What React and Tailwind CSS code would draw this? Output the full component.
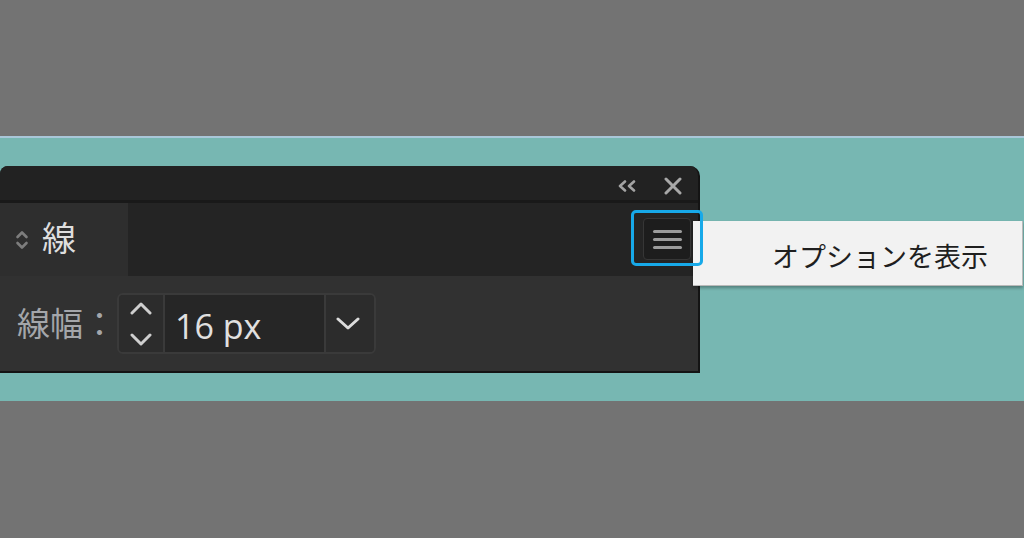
const jp = { fontFamily: '"Noto Sans CJK JP", "Noto Sans", sans-serif' };

const Chevron = ({ dir = 'down', className = '', w = 22, h = 12, stroke = 3 }) => (
    <svg width={w} height={h} viewBox={`0 0 ${w} ${h}`} className={className} fill="none">
        {dir === 'down' ? (
            <path d={`M2 2 L${w / 2} ${h - 2} L${w - 2} 2`} stroke="currentColor" strokeWidth={stroke} strokeLinecap="round" strokeLinejoin="round" />
        ) : (
            <path d={`M2 ${h - 2} L${w / 2} 2 L${w - 2} ${h - 2}`} stroke="currentColor" strokeWidth={stroke} strokeLinecap="round" strokeLinejoin="round" />
        )}
    </svg>
);

const StrokePanel = () => (
    <div className="w-[700px] rounded-tl-[8px] rounded-tr-[10px] overflow-hidden border-r-2 border-b-2 border-[#141414] bg-[#222222]">
        {/* title bar */}
        <div className="h-[34px] flex items-center justify-end pt-[6px] pr-[16px] bg-[#222222]">
            <svg width="20" height="12" viewBox="0 0 20 12" fill="none" className="text-[#a3a3a3]">
                <path d="M8 1.5 L3 6 L8 10.5" stroke="currentColor" strokeWidth="2.6" strokeLinecap="round" strokeLinejoin="round" />
                <path d="M17 1.5 L12 6 L17 10.5" stroke="currentColor" strokeWidth="2.6" strokeLinecap="round" strokeLinejoin="round" />
            </svg>
            <svg width="18" height="18" viewBox="0 0 18 18" fill="none" className="ml-[27px] text-[#a8a8a8]">
                <path d="M2 2 L16 16 M16 2 L2 16" stroke="currentColor" strokeWidth="3" strokeLinecap="round" />
            </svg>
        </div>
        <div className="h-[3px] bg-[#191919]" />

        {/* tab row */}
        <div className="h-[73px] flex bg-[#242424]">
            <div className="w-[128px] bg-[#2e2e2e] flex items-center pl-[15px]">
                <svg width="14" height="24" viewBox="0 0 14 24" fill="none" className="text-[#7d7d7d]">
                    <path d="M2.5 9 L7 4.5 L11.5 9" stroke="currentColor" strokeWidth="2.6" strokeLinecap="round" strokeLinejoin="round" />
                    <path d="M2.5 15 L7 19.5 L11.5 15" stroke="currentColor" strokeWidth="2.6" strokeLinecap="round" strokeLinejoin="round" />
                </svg>
                <span className="ml-[13px] pb-[5px] text-[34px] leading-none text-[#dedede]" style={jp}>線</span>
            </div>
            <div className="ml-auto mr-[7px] mt-[15px] w-[48px] h-[42px] rounded-[4px] border border-[#363636] bg-[#1d1d1d] flex flex-col items-center justify-center gap-[5px]">
                <div className="w-[29px] h-[3px] rounded-full bg-[#9c9c9c]" />
                <div className="w-[29px] h-[3px] rounded-full bg-[#9c9c9c]" />
                <div className="w-[29px] h-[3px] rounded-full bg-[#9c9c9c]" />
            </div>
        </div>

        {/* content */}
        <div className="h-[95px] bg-[#313131] flex items-center pl-[17px]">
            <span className="text-[33px] leading-none text-[#a4a6aa] pb-[2px]" style={jp}>線幅：</span>
            <div className="ml-[1px] h-[61px] flex rounded-[6px] border-2 border-[#3a3a3a] overflow-hidden">
                <div className="w-[46px] bg-[#2c2c2c] flex flex-col items-center justify-center gap-[18px] text-[#cfcfcf] border-r-2 border-[#3a3a3a]">
                    <Chevron dir="up" w={22} h={13} />
                    <Chevron dir="down" w={22} h={13} />
                </div>
                <div className="w-[161px] bg-[#262626] flex items-center pl-[10px] border-r-2 border-[#3a3a3a]">
                    <span className="text-[34px] leading-none text-[#e0e0e0] pt-[4px]" style={{ fontFamily: '"Open Sans", "Noto Sans", sans-serif' }}>16 px</span>
                </div>
                <div className="w-[48px] bg-[#2c2c2c] flex items-center justify-center pr-[4px] text-[#dcdcdc]">
                    <Chevron dir="down" w={24} h={13} />
                </div>
            </div>
        </div>
    </div>
);

export default function App() {
    return (
        <div className="w-[1024px] h-[538px] bg-[#737373] overflow-hidden">
            <div className="h-[136px]" />
            <div className="relative h-[265px] border-t-2 border-[#a9c7d9] bg-[#77b7b2] pt-[28px]">
                <StrokePanel />

                {/* tooltip */}
                <div className="absolute left-[693px] top-[83px] w-[330px] h-[65px] bg-[#f2f2f2] border-r border-b border-[#b9b9b9] shadow-[0_2px_3px_rgba(0,0,0,0.3)] flex items-center pl-[79px] pt-[4px]">
                    <span className="text-[27px] leading-none text-[#1f1f1f]" style={jp}>オプションを表示</span>
                </div>

                {/* highlight around the menu button */}
                <div className="absolute left-[631px] top-[72px] w-[72px] h-[56px] rounded-[5px] border-[3px] border-[#17a9e9]" />
            </div>
        </div>
    );
}
